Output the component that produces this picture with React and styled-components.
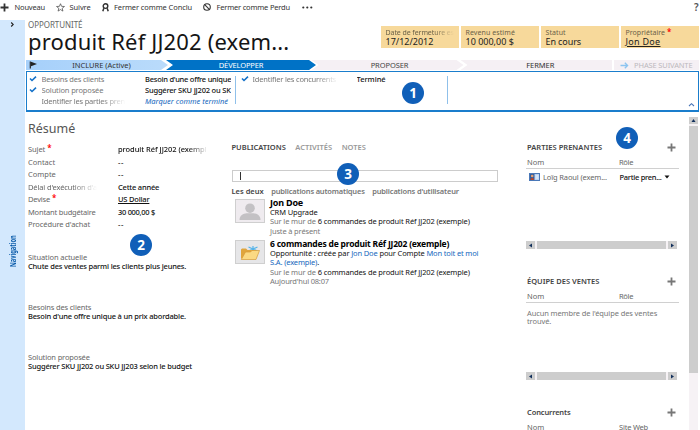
import React from "react";
import styled, { createGlobalStyle, css } from "styled-components";

const Global = createGlobalStyle`
  * { box-sizing: border-box; }
  body { margin: 0; background: #fff; overflow: hidden; }
`;

const Page = styled.div`
  width: 700px;
  height: 430px;
  overflow: hidden;
  display: grid;
  grid-template-rows: 20px 1fr;
  background: #fff;
  color: #666;
  font: 7.5px/10px "Noto Sans", "Open Sans", sans-serif;
  white-space: nowrap;
`;

const Text = styled.span`
  display: ${(p) => (p.$inline ? "inline" : "block")};
  color: ${(p) => p.$color || "inherit"};
  letter-spacing: ${(p) => p.$ls ?? -0.14}px;
  ${(p) => p.$size && css`font-size: ${p.$size}px;`}
  ${(p) => p.$strong && css`font-weight: 600;`}
  ${(p) => p.$fade && css`
    mask-image: linear-gradient(to right, #000 ${p.$fade}%, transparent 100%);
  `}
`;

const Value = styled(Text)`
  color: #111;
  font-weight: 500;
`;

const Linked = styled(Value)`
  text-decoration: underline;
  text-underline-offset: 1px;
`;

/* Command bar */
const Toolbar = styled.header`
  display: flex;
  height: 14px;
  color: #333;
`;
const Command = styled.div`
  display: flex;
  align-items: center;
  width: ${(p) => p.$w}px;
  svg { margin-right: ${(p) => p.$gap}px; flex: none; }
`;
const Help = styled.div`
  margin: 1px 0 0 auto;
  font-size: 10px;
  font-weight: 600;
  width: 6px;
  line-height: 12px;
  color: #555;
`;

/* Shell */
const Shell = styled.div`
  display: grid;
  grid-template-columns: 25px 675px;
  min-height: 0;
`;
const Sidebar = styled.nav`
  background: #d3e8fd;
  display: flex;
  flex-direction: column;
  align-items: center;
  svg { margin-top: 1px; }
`;
const SideLabel = styled.div`
  margin-top: 201px;
  writing-mode: vertical-rl;
  transform: rotate(180deg) scaleY(0.72);
  font-size: 8px;
  font-weight: 700;
  line-height: 10px;
  color: #0b5cab;
  margin-right: -1px;
`;
const Main = styled.main`
  display: grid;
  grid-template-rows: 40px 52px 1fr;
  min-height: 0;
`;

/* Record header */
const RecordHeader = styled.section`
  display: flex;
  justify-content: space-between;
  padding: 0 1px 0 3px;
`;
const Title = styled.h1`
  margin: 0;
  font-size: 22px;
  font-weight: 400;
  line-height: 22px;
  letter-spacing: 0.16px;
  color: #151515;
`;
const Tiles = styled.div`
  display: grid;
  grid-template-columns: repeat(4, 78px);
  gap: 2px;
  height: 22px;
  margin-top: 6px;
`;
const Tile = styled.div`
  background: #f7d99b;
  padding: 2px 3px 0 4.5px;
  overflow: hidden;
`;
const TileName = styled.div`
  display: flex;
  gap: 2px;
  font-size: 7px;
  line-height: 9px;
  color: #6b6147;
`;
const TileValue = styled.div`
  font-size: 9px;
  line-height: 10px;
  color: #222;
  letter-spacing: ${(p) => p.$ls}px;
  text-decoration: ${(p) => (p.$link ? "underline" : "none")};
  text-underline-offset: 1px;
`;
const Star = styled.span`
  color: #f00;
  font-size: 8px;
  line-height: 8px;
  font-weight: 600;
`;

/* Process */
const Stages = styled.div`
  display: flex;
  height: 10px;
  margin-left: 1px;
`;
const tip = css`polygon(0 0, calc(100% - 7px) 0, 100% 50%, calc(100% - 7px) 100%, 0 100%)`;
const notched = css`polygon(0 0, calc(100% - 7px) 0, 100% 50%, calc(100% - 7px) 100%, 0 100%, 7px 50%)`;
const ending = css`polygon(0 0, 100% 0, 100% 100%, 0 100%, 7px 50%)`;
const shapes = { tip, notched, ending, plain: "none" };
const Stage = styled.div`
  display: flex;
  align-items: center;
  justify-content: center;
  gap: 5px;
  width: ${(p) => p.$w}px;
  margin-left: ${(p) => p.$ml || 0}px;
  padding-left: ${(p) => p.$pl || 0}px;
  background: ${(p) => p.$bg};
  color: ${(p) => p.$color};
  clip-path: ${(p) => shapes[p.$shape]};
`;
const FlagSlot = styled.span`
  width: ${(p) => p.$w}px;
  padding-left: 3px;
  height: 10px;
`;
const StepBox = styled.div`
  display: grid;
  grid-template-columns: 209px 212px 1fr;
  height: 41px;
  width: 673px;
  margin-left: 1px;
  margin-top: 1px;
  border: 1px solid #1a7dcc;
  border-bottom-width: 2px;
  padding-top: 2px;
`;
const StepColumn = styled.div`
  border-right: 1px solid #8fc0ea;
  height: 28px;
  margin-top: 2px;
`;
const Step = styled.div`
  display: grid;
  grid-template-columns: ${(p) => p.$cols};
  height: 11px;
  margin-top: ${(p) => (p.$first ? -3 : 0)}px;
  align-items: center;
  color: #777;
  > * { overflow: hidden; }
  > svg { overflow: visible; margin-left: ${(p) => p.$indent ?? 1.5}px; }
`;
const MarkDone = styled(Text)`
  color: #1467bd;
  font-style: italic;
`;
const Collapse = styled.div`
  display: flex;
  align-items: flex-end;
  justify-content: flex-end;
  padding: 0 3px 3px 0;
`;

/* Body */
const Body = styled.div`
  display: grid;
  grid-template-columns: 203px 298px 163px 1fr;
  min-height: 0;
`;
const Summary = styled.section`
  padding: 8px 0 0 3px;
  overflow: hidden;
`;
const SummaryTitle = styled.h2`
  margin: 0 0 5px;
  font-size: 12.5px;
  line-height: 18px;
  font-weight: 400;
  color: #555;
`;
const Field = styled.div`
  display: grid;
  grid-template-columns: 90px 90px;
  height: 12.5px;
  align-items: center;
`;
const Label = styled.div`
  display: flex;
  gap: 2px;
  overflow: hidden;
  width: 72px;
`;
const Memo = styled.div`
  height: 50px;
  line-height: 9.5px;
`;
const Memos = styled.div`
  padding-top: 22px;
`;

const Wall = styled.section`
  padding: 30px 0 0 3.5px;
`;
const Tabs = styled.div`
  display: flex;
  gap: ${(p) => p.$gap}px;
  color: #999;
`;
const PostInput = styled.div`
  width: 266px;
  height: 12px;
  margin: 18px 0 4px;
  border: 1px solid #ccc;
  padding: 1px 0 0 7px;
`;
const Caret = styled.div`
  width: 1px;
  height: 8px;
  background: #333;
`;
const Posts = styled.div`
  padding-top: 2px;
`;
const Post = styled.article`
  display: grid;
  grid-template-columns: 30px 1fr;
  column-gap: 5px;
  margin-left: 3.5px;
  height: 41px;
  color: #111;
  line-height: 9.25px;
`;
const PostTitle = styled(Text)`
  color: #000;
  font-weight: 700;
  line-height: 10px;
`;
const Picture = styled.div`
  width: 30px;
  height: 24px;
  margin-top: 1px;
  border: 1px solid #cfcfcf;
  background: ${(p) => p.$bg};
  svg { display: block; }
`;
const A = styled.span`color: #1467bd;`;
const Muted = styled.span`color: #777;`;

const Related = styled.aside`
  padding-top: 30px;
`;
const Panel = styled.section`
  height: ${(p) => p.$h}px;
  width: 153px;
  display: flex;
  flex-direction: column;
`;
const PanelHead = styled.div`
  display: flex;
  justify-content: space-between;
  align-items: center;
  height: 10px;
  padding: 0 3px 0 1px;
  color: #444;
`;
const Columns = styled.div`
  display: grid;
  grid-template-columns: 92px 1fr;
  margin-top: 4.5px;
  padding: 0 0 1px 1px;
  border-bottom: 1px solid #d0d0d0;
`;
const Contact = styled.div`
  display: grid;
  grid-template-columns: 14px 76.5px 44px 6px;
  padding-left: 3px;
  margin-top: 3px;
  align-items: center;
`;
const Empty = styled.div`
  padding: 6px 0 0 1px;
  line-height: 8.5px;
  color: #777;
`;
const HScroll = styled.div`
  display: grid;
  grid-template-columns: 9px 129px 9px;
  gap: 2px;
  width: 151px;
  height: 8px;
  margin-top: auto;
  margin-bottom: 27px;
  background: #f6f2f5;
`;
const VScroll = styled.div`
  width: 9px;
  margin: 5px 0 0 0;
  background: #f6f2f5;
  display: grid;
  grid-template-rows: 7px 247px 1fr;
  gap: 2px;
`;
const Thumb = styled.div`
  background: #cdcdcd;
  display: flex;
  align-items: center;
  justify-content: center;
`;

const Badge = styled.div`
  position: absolute;
  left: ${(p) => p.$x - 11}px;
  top: ${(p) => p.$y - 11}px;
  width: 22px;
  height: 22px;
  border-radius: 50%;
  background: #105fb8;
  color: #fff;
  font-size: 13.5px;
  font-weight: 700;
  line-height: 22px;
  text-align: center;
`;

const Plus = ({ c = "#777" }) => (
  <svg width="9" height="9" viewBox="0 0 9 9"><path d="M4.5 .5v8M.5 4.5h8" stroke={c} strokeWidth="1.8" /></svg>
);
const Check = () => (
  <svg width="8" height="7" viewBox="0 0 8 7"><path d="M1 3.5l2 2L7 1.6" stroke="#1270c8" strokeWidth="1.6" fill="none" /></svg>
);
const Arrow = ({ d }) => (
  <svg width="5" height="5" viewBox="0 0 5 5"><path d={d} fill="#12305c" /></svg>
);

function HorizontalBar() {
  return (
    <HScroll>
      <Thumb><Arrow d="M4 .5v4L1 2.5z" /></Thumb>
      <Thumb />
      <Thumb><Arrow d="M1 .5v4l3-2z" /></Thumb>
    </HScroll>
  );
}

function ListHead({ title, ls, second, secondLs }) {
  return (
    <>
      <PanelHead><Text $strong $ls={ls}>{title}</Text><Plus /></PanelHead>
      <Columns><Text $ls={0}>Nom</Text><Text $ls={secondLs}>{second}</Text></Columns>
    </>
  );
}

const fields = [
  { name: "Sujet", ls: -0.1, required: true, value: "produit Réf JJ202 (exempl", vls: -0.05, fade: 78 },
  { name: "Contact", ls: 0, value: "--", vls: 0.6 },
  { name: "Compte", ls: 0, value: "--", vls: 0.6 },
  { name: "Délai d'exécution d'a", ls: -0.13, nameFade: 65, value: "Cette année", vls: -0.2 },
  { name: "Devise", ls: -0.2, required: true, value: "US Dollar", vls: -0.2, link: true },
  { name: "Montant budgétaire", ls: -0.18, value: "30 000,00 $", vls: -0.3 },
  { name: "Procédure d'achat", ls: -0.09, value: "--", vls: 0.6 },
];
const memos = [
  ["Situation actuelle", -0.1, "Chute des ventes parmi les clients plus jeunes."],
  ["Besoins des clients", -0.17, "Besoin d'une offre unique à un prix abordable."],
  ["Solution proposée", -0.15, "Suggérer SKU JJ202 ou SKU JJ203 selon le budget"],
];

export default function App() {
  return (
    <Page>
      <Global />
      <Toolbar>
        <Command $w={56} $gap={5.5}><Plus c="#333" /><Text $ls={-0.18}>Nouveau</Text></Command>
        <Command $w={46} $gap={4.5}>
          <svg width="9" height="9" viewBox="0 0 10 10"><path d="M5 .8l1.2 2.9 3.2.2-2.5 2 .8 3.1L5 7.3 2.3 9l.8-3.1-2.5-2 3.2-.2z" fill="none" stroke="#444" strokeWidth=".8" /></svg>
          <Text $ls={-0.1}>Suivre</Text>
        </Command>
        <Command $w={101} $gap={5}>
          <svg width="7" height="9" viewBox="0 0 7 9"><circle cx="3.5" cy="3.1" r="2.3" fill="none" stroke="#333" strokeWidth="1.4" /><path d="M1.8 5.3L.8 8.2M5.2 5.3l1 2.9" stroke="#333" strokeWidth="1.5" /></svg>
          <Text $ls={-0.1}>Fermer comme Conclu</Text>
        </Command>
        <Command $w={99} $gap={5.5}>
          <svg width="8" height="8" viewBox="0 0 8 8"><circle cx="4" cy="4" r="3.3" fill="none" stroke="#333" strokeWidth="1.1" /><path d="M1.7 1.7l4.6 4.6" stroke="#333" strokeWidth="1.1" /></svg>
          <Text $ls={-0.19}>Fermer comme Perdu</Text>
        </Command>
        <Command $w={12} $gap={0}>
          <svg width="11" height="3" viewBox="0 0 11 3"><g fill="#333"><circle cx="1.3" cy="1.5" r="1.1" /><circle cx="5.3" cy="1.5" r="1.1" /><circle cx="9.3" cy="1.5" r="1.1" /></g></svg>
        </Command>
        <Help>?</Help>
      </Toolbar>

      <Shell>
        <Sidebar>
          <svg width="5" height="7" viewBox="0 0 5 7"><path d="M1.2 1.5l2 2-2 2" stroke="#222" strokeWidth="1.1" fill="none" /></svg>
          <SideLabel>Navigation</SideLabel>
        </Sidebar>
        <Main>
          <RecordHeader>
            <div>
              <Text $size={8} $ls={-0.06}>OPPORTUNITÉ</Text>
              <Title>produit Réf JJ202 (exem...</Title>
            </div>
            <Tiles>
              <Tile><TileName><Text $ls={-0.07} $fade={70}>Date de fermeture es</Text></TileName><TileValue $ls={0}>17/12/2012</TileValue></Tile>
              <Tile><TileName><Text $ls={0.09}>Revenu estimé</Text></TileName><TileValue $ls={0}>10 000,00 $</TileValue></Tile>
              <Tile><TileName><Text $ls={0.08}>Statut</Text></TileName><TileValue $ls={-0.1}>En cours</TileValue></Tile>
              <Tile><TileName><Text $ls={0.03}>Propriétaire</Text><Star>*</Star></TileName><TileValue $ls={0.3} $link>Jon Doe</TileValue></Tile>
            </Tiles>
          </RecordHeader>

          <div>
            <Stages>
              <Stage $w={142} $bg="linear-gradient(to right, #a6d0fa, #badbfb)" $color="#333" $shape="tip">
                <FlagSlot $w={41}><svg width="9" height="10" viewBox="0 0 9 10"><path d="M1.3 1.5v7" stroke="#222" strokeWidth="1.2" /><path d="M2 1.7l6 2.3-6 2.3z" fill="#222" /></svg></FlagSlot>
                <Text $ls={0}>INCLURE (Active)</Text>
                <FlagSlot $w={32} />
              </Stage>
              <Stage $w={150} $ml={-2} $bg="#0072c6" $color="#fff" $shape="notched"><Text>DÉVELOPPER</Text></Stage>
              <Stage $w={152} $ml={-4.5} $pl={4} $bg="#f5f0f4" $color="#444" $shape="notched"><Text $ls={-0.1}>PROPOSER</Text></Stage>
              <Stage $w={151.5} $ml={-3} $pl={8} $bg="#f5f0f4" $color="#333" $shape="ending"><Text $ls={-0.06}>FERMER</Text></Stage>
              <Stage $w={85.5} $ml={1.5} $bg="#f5f0f4" $color="#bcb8bd" $shape="plain">
                <svg width="9" height="7" viewBox="0 0 9 7"><path d="M.5 3.5h7M4.8 .8l2.8 2.7-2.8 2.7" stroke="#8cc4f0" strokeWidth="1.3" fill="none" /></svg>
                <Text $ls={-0.14}>PHASE SUIVANTE</Text>
              </Stage>
            </Stages>
            <StepBox>
              <StepColumn>
                <Step $first $cols="14.5px 103.5px 86px"><Check /><Text $ls={-0.19}>Besoins des clients</Text><Value $ls={-0.24}>Besoin d'une offre unique</Value></Step>
                <Step $cols="14.5px 103.5px 86px"><Check /><Text $ls={-0.15}>Solution proposée</Text><Value $ls={-0.2}>Suggérer SKU JJ202 ou SK</Value></Step>
                <Step $cols="14.5px 84px 19.5px 86px"><span /><Text $ls={-0.2} $fade={70}>Identifier les parties pren</Text><span /><MarkDone $ls={0}>Marquer comme terminé</MarkDone></Step>
              </StepColumn>
              <StepColumn>
                <Step $first $indent={4.5} $cols="16.5px 85px 19px 60px"><Check /><Text $ls={-0.18} $fade={75}>Identifier les concurrents</Text><span /><Value $ls={-0.03}>Terminé</Value></Step>
              </StepColumn>
              <Collapse><svg width="7" height="5" viewBox="0 0 7 5"><path d="M1 4l2.5-2.3L6 4" stroke="#4a76b8" strokeWidth="1.1" fill="none" /></svg></Collapse>
            </StepBox>
          </div>

          <Body>
            <Summary>
              <SummaryTitle>Résumé</SummaryTitle>
              {fields.map((f) => {
                const V = f.link ? Linked : Value;
                return (
                  <Field key={f.name}>
                    <Label><Text $ls={f.ls} $fade={f.nameFade}>{f.name}</Text>{f.required && <Star>*</Star>}</Label>
                    <div><V $ls={f.vls} $fade={f.fade} $inline={f.link}>{f.value}</V></div>
                  </Field>
                );
              })}
              <Memos>
                {memos.map(([name, ls, text]) => (
                  <Memo key={name}><Text $ls={ls}>{name}</Text><Value $ls={-0.18}>{text}</Value></Memo>
                ))}
              </Memos>
            </Summary>

            <Wall>
              <Tabs $gap={9.5}>
                <Text $strong $ls={0} $color="#444">PUBLICATIONS</Text>
                <Text $strong $ls={0}>ACTIVITÉS</Text>
                <Text $strong $ls={0}>NOTES</Text>
              </Tabs>
              <PostInput><Caret /></PostInput>
              <Tabs $gap={7.5}>
                <Text $strong $ls={0} $color="#444">Les deux</Text>
                <Text $strong $ls={-0.18} $color="#777">publications automatiques</Text>
                <Text $strong $ls={-0.16} $color="#777">publications d'utilisateur</Text>
              </Tabs>
              <Posts>
                <Post>
                  <Picture $bg="#efebef">
                    <svg width="28" height="22" viewBox="0 0 28 22"><circle cx="14" cy="8.2" r="4.8" fill="#c3c1c4" /><path d="M3.5 20c0-5 4-6.5 7-6.8h7c3 .3 7 1.8 7 6.8z" fill="#c3c1c4" /></svg>
                  </Picture>
                  <div>
                    <PostTitle $size={9} $ls={-0.2}>Jon Doe</PostTitle>
                    <Text $ls={-0.12}>CRM Upgrade</Text>
                    <Text $ls={-0.12}><Muted>Sur le mur de </Muted>6 commandes de produit Réf JJ202 (exemple)</Text>
                    <Text $ls={-0.15}><Muted>Juste à présent</Muted></Text>
                  </div>
                </Post>
                <Post>
                  <Picture $bg="#e6e6e8">
                    <svg width="28" height="22" viewBox="0 0 28 22">
                      <path d="M17 5v5M12.5 6l9 4M21.500 6l-9 4" stroke="#55b4ea" strokeWidth="1.2" />
                      <path d="M5 17.500V8.500l1-1h4l1.500 1.500H20V17z" fill="#e0a53c" />
                      <path d="M9.500 11l5 0 1.500-1.500h7.500L20 18.500H5.300z" fill="#fbd983" stroke="#d79b36" strokeWidth=".7" />
                    </svg>
                  </Picture>
                  <div>
                    <PostTitle $size={8.5} $ls={-0.2}>6 commandes de produit Réf JJ202 (exemple)</PostTitle>
                    <Text $ls={-0.14}>Opportunité : créée par <A>Jon Doe</A> pour Compte <A>Mon toit et moi</A></Text>
                    <Text $ls={-0.15}><A>S.A. (exemple)</A>.</Text>
                    <Text $ls={-0.12}><Muted>Sur le mur de </Muted>6 commandes de produit Réf JJ202 (exemple)</Text>
                    <Text $ls={-0.19}><Muted>Aujourd'hui 08:07</Muted></Text>
                  </div>
                </Post>
              </Posts>
            </Wall>

            <Related>
              <Panel $h={134}>
                <ListHead title="PARTIES PRENANTES" ls={0.03} second="Rôle" secondLs={-0.3} />
                <Contact>
                  <svg width="11" height="8" viewBox="0 0 11 8"><rect x=".5" y=".5" width="10" height="7" fill="#b9d3f2" stroke="#4a78b8" /><rect x="1" y="1" width="4.5" height="6" fill="#345f9e" /><circle cx="3.200" cy="3" r="1.3" fill="#e8a070" /><path d="M1.5 7c0-3 3.500-3 3.500 0z" fill="#b5462a" /><path d="M6.500 3h3M6.500 5h3" stroke="#fff" strokeWidth=".8" /></svg>
                  <Text $ls={-0.13}>Loïg Raoul (exem...</Text>
                  <Value $ls={-0.28}>Partie pren...</Value>
                  <svg width="6" height="4" viewBox="0 0 6 4"><path d="M.5 .5h5L3 3.500z" fill="#111" /></svg>
                </Contact>
                <HorizontalBar />
              </Panel>
              <Panel $h={131}>
                <ListHead title="ÉQUIPE DES VENTES" ls={0} second="Rôle" secondLs={-0.3} />
                <Empty><Text $ls={-0.11}>Aucun membre de l'équipe des ventes</Text><Text $ls={-0.1}>trouvé.</Text></Empty>
                <HorizontalBar />
              </Panel>
              <Panel $h={40}>
                <ListHead title="Concurrents" ls={-0.14} second="Site Web" secondLs={-0.2} />
              </Panel>
            </Related>

            <VScroll>
              <Thumb><Arrow d="M.5 4h4L2.500 1z" /></Thumb>
              <Thumb />
            </VScroll>
          </Body>
        </Main>
      </Shell>

      <Badge $x={413} $y={93}>1</Badge>
      <Badge $x={141} $y={245}>2</Badge>
      <Badge $x={348} $y={174}>3</Badge>
      <Badge $x={627} $y={138}>4</Badge>
    </Page>
  );
}
